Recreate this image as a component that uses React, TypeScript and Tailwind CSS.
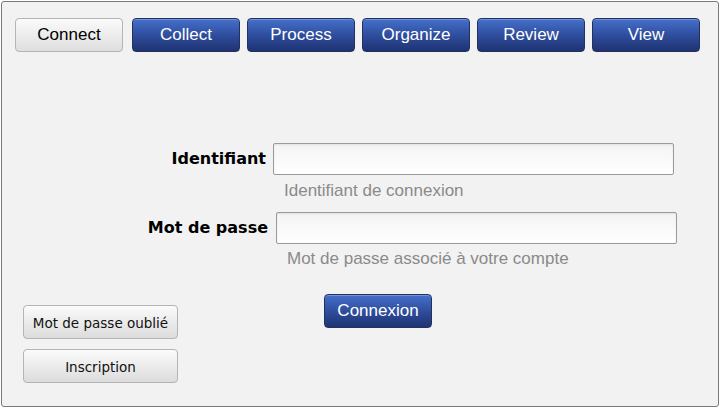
import React from "react";

const blue =
  "h-[34px] w-[108px] rounded-[4px] border border-[#22325f] bg-gradient-to-b from-[#4570cc] via-[#2f4e9e] to-[#1f3372] text-white text-[17px] font-['Liberation_Sans',Arial,sans-serif] flex items-center justify-center shadow-[inset_0_1px_0_rgba(255,255,255,0.25)]";
const gray =
  "h-[34px] w-[108px] rounded-[4px] border border-[#b4b4b4] bg-gradient-to-b from-[#fbfbfb] to-[#dedede] text-black text-[17px] font-['Liberation_Sans',Arial,sans-serif] flex items-center justify-center";
const input =
  "h-[32px] w-[401px] rounded-[2px] border border-[#9a9a9a] bg-gradient-to-b from-[#f4f4f4] to-[#ffffff] shadow-[inset_0_1px_2px_rgba(0,0,0,0.08)]";
const label =
  "w-[130px] text-right font-bold text-[16px] text-black font-['DejaVu_Sans',Verdana,sans-serif]";
const hint = "text-[17px] text-[#8a8a8a] font-['Liberation_Sans',Arial,sans-serif] leading-[20px]";
const small =
  "h-[34px] w-[155px] rounded-[4px] border border-[#b4b4b4] bg-gradient-to-b from-[#fbfbfb] to-[#dcdcdc] text-[#111] text-[13.5px] font-['DejaVu_Sans',Verdana,sans-serif] flex items-center justify-center pt-[3px]";

export default function App() {
  return (
    <div className="w-[720px] h-[408px] bg-white pt-[1px] pl-[1px]">
      <div className="w-[718px] h-[406px] rounded-[3px] border border-[#7a7a7a] bg-[#f2f2f2] flex flex-col">
        <div className="flex pl-[13px] pt-[16px] gap-[7px]">
          <div className={gray}>Connect</div>
          <div className={blue + " ml-[2px]"}>Collect</div>
          <div className={blue}>Process</div>
          <div className={blue}>Organize</div>
          <div className={blue}>Review</div>
          <div className={blue}>View</div>
        </div>
        <div className="flex items-center mt-[91px] ml-[134px] gap-[7px]">
          <div className={label}>Identifiant</div>
          <div className={input} />
        </div>
        <div className={hint + " ml-[282px] mt-[6px]"}>Identifiant de connexion</div>
        <div className="flex items-center mt-[11px] ml-[136px] gap-[8px]">
          <div className={label}>Mot de passe</div>
          <div className={input} />
        </div>
        <div className={hint + " ml-[285px] mt-[5px]"}>Mot de passe associé à votre compte</div>
        <div className="flex ml-[322px] mt-[25px]">
          <div className={blue}>Connexion</div>
        </div>
        <div className="flex flex-col gap-[10px] ml-[21px] mt-[-23px]">
          <div className={small}>Mot de passe oublié</div>
          <div className={small}>Inscription</div>
        </div>
      </div>
    </div>
  );
}
